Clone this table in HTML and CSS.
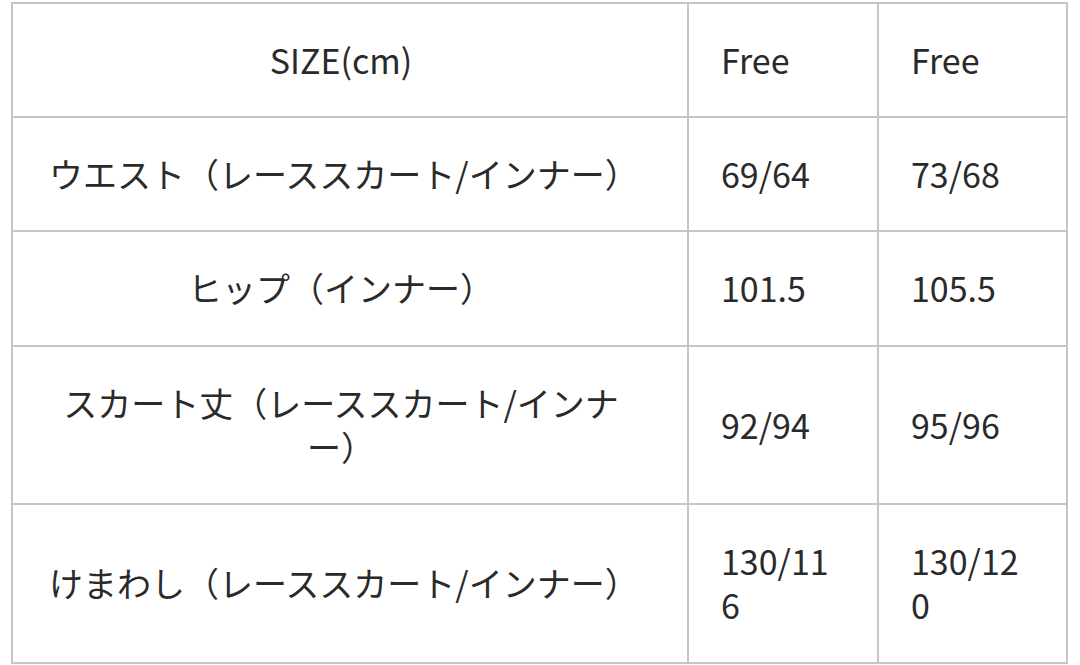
FILE: index.html
```html
<!DOCTYPE html>
<html lang="ja">
<head>
<meta charset="utf-8">
<link rel="stylesheet" href="styles.css">
</head>
<body>
<table class="size-table">
  <colgroup>
    <col class="c-label">
    <col class="c-val">
    <col class="c-val2">
  </colgroup>
  <tbody>
    <tr class="row-tight">
      <td class="label">SIZE(cm)</td>
      <td class="val">Free</td>
      <td class="val">Free</td>
    </tr>
    <tr class="row-tight">
      <td class="label">ウエスト（レーススカート/インナー）</td>
      <td class="val">69/64</td>
      <td class="val">73/68</td>
    </tr>
    <tr>
      <td class="label">ヒップ（インナー）</td>
      <td class="val">101.5</td>
      <td class="val">105.5</td>
    </tr>
    <tr class="row-tight">
      <td class="label">スカート丈（レーススカート/インナー）</td>
      <td class="val">92/94</td>
      <td class="val">95/96</td>
    </tr>
    <tr>
      <td class="label">けまわし（レーススカート/インナー）</td>
      <td class="val">130/116</td>
      <td class="val">130/120</td>
    </tr>
  </tbody>
</table>
</body>
</html>
```
FILE: styles.css
```css
html, body {
  margin: 0;
  padding: 0;
  background: #ffffff;
}

body {
  padding: 2px 0 0 11px;
  font-family: "Noto Sans CJK JP", "Noto Sans", sans-serif;
  color: #2a2a2a;
}

.size-table {
  border-collapse: collapse;
  table-layout: fixed;
  width: 1055px;
  font-size: 34px;
  font-weight: 400;
  line-height: 44px;
}

.c-label { width: 676px; }
.c-val { width: 190px; }
.c-val2 { width: 189px; }

.size-table td {
  border: 2px solid #c6c6c6;
  padding: 34px 40px 35px 32px;
  vertical-align: middle;
  word-break: break-all;
}

.size-table .row-tight td {
  padding-bottom: 34px;
}

.size-table .label {
  text-align: center;
  padding-left: 36px;
  padding-right: 54px;
}

.size-table .val {
  text-align: left;
}
```
